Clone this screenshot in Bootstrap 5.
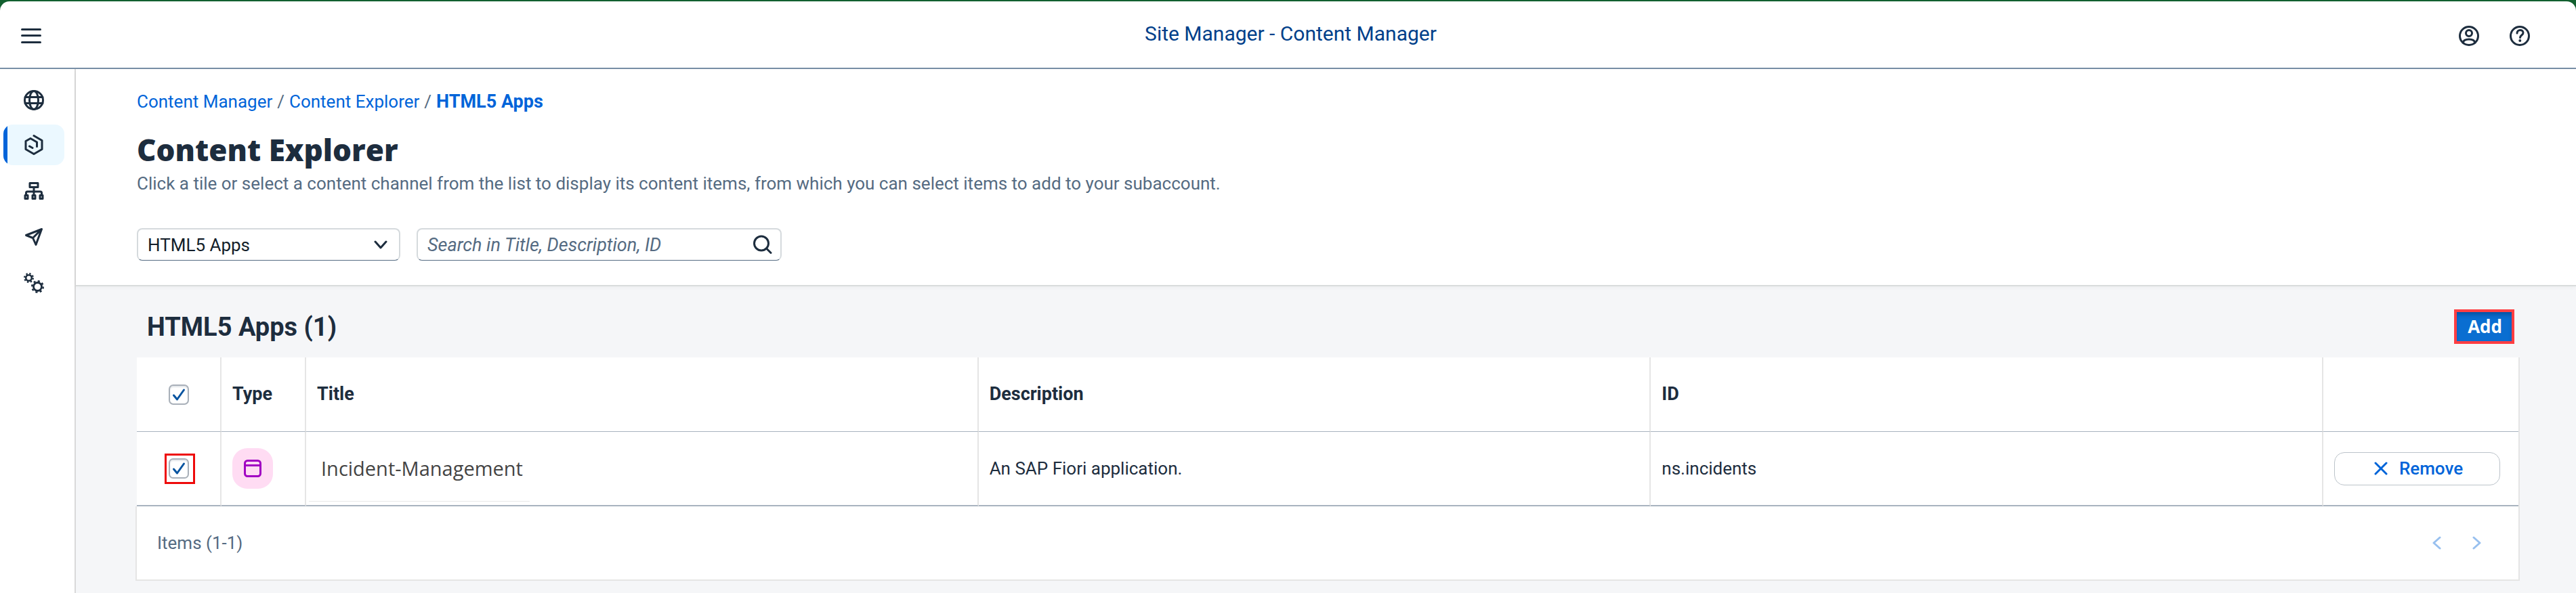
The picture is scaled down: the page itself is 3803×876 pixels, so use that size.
<!DOCTYPE html>
<html lang="en">
<head>
<meta charset="utf-8">
<meta name="viewport" content="width=device-width, initial-scale=1">
<title>Site Manager - Content Manager</title>
<link href="https://cdn.jsdelivr.net/npm/bootstrap@5.3.0/dist/css/bootstrap.min.css" rel="stylesheet">
<style>
  :root { --ink: #1d2d3e; --muted: #556b82; --link: #0064d9; --line: #e5e5e5; --rule: #a8b3bf; }
  body { font-family: Roboto, "Liberation Sans", sans-serif; font-size: 26px; line-height: 36px; color: var(--ink); background: #f5f6f8; min-height: 100vh; }
  svg { display: block; fill: none; stroke: currentColor; stroke-width: 3; stroke-linecap: round; stroke-linejoin: round; }
  a { color: var(--link); text-decoration: none; }
  .shell-frame { background: #12602f; padding-top: 2px; }
  .shell-bar { display: grid; grid-template-columns: 1fr auto 1fr; background: #fff; height: 100px; border-bottom: 2px solid #788fa6; border-radius: 14px 14px 0 0; padding: 4px 31px 0; }
  .shell-title { font-size: 30px; color: #00408a; padding: 0 0 6px 8px; margin: 0; font-weight: 400; }
  .shell-tools { gap: 45px; padding-right: 37px; }
  .icon-btn { color: var(--ink); border: 0; padding: 0; border-radius: 0; line-height: 1; }
  .side-nav { width: 112px; border-right: 2px solid #d9d9d9; padding: 14px 15px 0 5px; gap: 8px; background: #fff; }
  .side-nav a { height: 60px; color: var(--ink); border-radius: 14px; overflow: hidden; }
  .side-nav a.active { background: linear-gradient(to right, var(--link) 6px, #ebf8ff 6px); }
  .page-head { background: #fff; border-bottom: 2px solid #d9dcdc; padding: 30px 90px 36px; box-shadow: 0 2px 6px rgba(0,0,0,.04); }
  .crumbs { height: 36px; color: var(--muted); --bs-breadcrumb-divider: "/"; --bs-breadcrumb-item-padding-x: 7px; --bs-breadcrumb-divider-color: #556b82; --bs-breadcrumb-font-size: 26px; }
  .crumbs .current { font-size: 27px; font-weight: 700; }
  .page-title { font-family: "Open Sans", sans-serif; font-weight: 800; font-size: 44px; line-height: 56px; margin: 25px 0 0; }
  .intro { color: var(--muted); margin: 4px 0 0; }
  .filters { gap: 24px; }
  .field { height: 48px; font-size: 26px; line-height: 36px; color: #131e29; border: 2px solid #d5dadd; border-bottom: 1px solid var(--muted); border-radius: 8px; padding: 5px 14px; background-color: #fff; }
  .channel { width: 389px; --bs-form-select-bg-img: url("data:image/svg+xml,%3csvg xmlns='http://www.w3.org/2000/svg' viewBox='0 0 20 20'%3e%3cpath fill='none' stroke='%231d2d3e' stroke-width='3' stroke-linecap='round' stroke-linejoin='round' d='M2 5l8 9 8-9'/%3e%3c/svg%3e"); background-image: var(--bs-form-select-bg-img); background-size: 20px 20px; background-position: right 17px center; }
  .finder { width: 539px; }
  .finder .field::placeholder { color: var(--muted); font-style: italic; font-size: 27px; opacity: 1; }
  .finder button { position: absolute; right: 14px; top: 10px; }
  .content-area { padding: 34px 83px 14px 88px; }
  .list-head { padding: 0 8px 20px 17px; }
  .list-title { font-size: 38px; line-height: 44px; font-weight: 700; margin: 0; }
  .btn-add { font-family: "Open Sans", sans-serif; font-weight: 700; font-size: 26px; line-height: 36px; color: #fff; background: #0a6ed1; border: 4px solid #ff3e42; border-radius: 0; padding: 3px 14px 4px 16px; box-shadow: inset 0 6px 6px -2px rgba(0,40,90,.4); }
  .btn-add:hover { color: #fff; background: #0a6ed1; }
  .panel { padding-left: 2px; }
  .items { table-layout: fixed; margin: 0; border-right: 2px solid var(--line); border-collapse: separate; border-spacing: 0; --bs-table-color: #1d2d3e; --bs-table-bg: #fff; }
  .items th, .items td { height: 110px; padding: 0 14px 0 16px; vertical-align: middle; border: 0 solid var(--line); border-right-width: 2px; }
  .items th { border-bottom: 1px solid var(--rule); font-size: 27px; padding-bottom: 2px; }
  .items td { border-bottom: 2px solid var(--rule); }
  .items th:last-child, .items td:last-child { border-right: 0; }
  .items th:first-child, .items td:first-child { padding: 0; }
  .col-tick, .col-kind { width: 125px; }
  .col-act { width: 288px; }
  .tick { width: 30px; height: 30px; margin: 0; border: 2px solid #a9b0b9; border-radius: 4px; background-color: #fff; display: block; float: none; box-shadow: inset 0 2px 2px #e3e6ea; }
  .tick:checked { background-color: #fff; border-color: #a9b0b9; background-size: 20px 20px; background-image: url("data:image/svg+xml,%3csvg xmlns='http://www.w3.org/2000/svg' viewBox='0 0 20 20'%3e%3cpath fill='none' stroke='%230854a0' stroke-width='3' stroke-linecap='round' stroke-linejoin='round' d='M2.500 11l5 6L17.500 3'/%3e%3c/svg%3e"); }
  .tick-mark { border: 3px solid #ee0a0a; padding: 4px 6px 5px 3px; }
  .kind { width: 60px; height: 60px; border-radius: 22px; background: #ffdcf3; color: #a100c2; }
  .item-name { font-family: "Open Sans", sans-serif; font-size: 29px; color: #444; width: 326px; height: 98px; margin: 0 0 0 -12px; padding-left: 18px; border-bottom: 1px solid #e8e8e8; }
  .btn-remove { width: 245px; height: 49px; font-size: 26px; line-height: 36px; font-weight: 500; color: var(--link); background: #fff; border: 1px solid #bcc3ca; border-radius: 15px; padding: 0 0 0 4px; gap: 17px; }
  .pager { background: #fff; border: solid var(--line); border-width: 0 2px 2px; margin-left: -2px; height: 110px; padding: 0 54px 0 30px; color: var(--muted); }
  .pager-steps { gap: 46px; }
  .pager button:disabled { color: var(--link); opacity: .4; border: 0; }
</style>
</head>
<body class="d-flex flex-column">
<div class="shell-frame">
  <header class="shell-bar align-items-center">
    <button type="button" class="btn icon-btn text-start" aria-label="Menu"><svg width="30" height="24" viewBox="0 0 30 24"><path d="M1.500 2.500h27M1.500 11.500h27M1.500 21.500h27"/></svg></button>
    <h1 class="shell-title">Site Manager - Content Manager</h1>
    <div class="d-flex justify-content-end shell-tools">
      <button type="button" class="btn icon-btn" aria-label="Profile"><svg width="30" height="30" viewBox="0 0 30 30"><circle cx="15" cy="15" r="13.500"/><circle cx="15" cy="11" r="4.500"/><path d="M6 25c1-4 4-5 9-5s8 1 9 5"/></svg></button>
      <button type="button" class="btn icon-btn" aria-label="Help"><svg width="30" height="30" viewBox="0 0 30 30"><circle cx="15" cy="15" r="13.500"/><path d="M11 11c0-6 9-6 9-.5 0 3.500-4.500 3.500-4.500 7"/><circle cx="15.300" cy="22" r="1" fill="currentColor" stroke-width="2"/></svg></button>
    </div>
  </header>
</div>
<div class="d-flex align-items-stretch flex-grow-1">
  <nav class="side-nav d-flex flex-column flex-shrink-0" aria-label="Main">
    <a href="#" class="d-flex align-items-center justify-content-center" aria-label="Sites"><svg width="30" height="34" viewBox="0 -4 30 34"><circle cx="15" cy="15" r="13.500"/><ellipse cx="15" cy="15" rx="6.500" ry="13.500"/><path d="M2 10.500h26M2 19.500h26"/></svg></a>
    <a href="#" class="active d-flex align-items-center justify-content-center" aria-label="Content Manager"><svg width="30" height="30" viewBox="0 0 30 30"><path d="M15 1.500l12 7v13l-12 7-12-7V9.500L10 5.500l9.500 5.500v6.500M8.500 17l4.500 2.500"/></svg></a>
    <a href="#" class="d-flex align-items-center justify-content-center" aria-label="Structure"><svg width="30" height="30" viewBox="0 0 30 30"><rect x="9" y="3.500" width="12" height="6"/><path d="M15 10v9M3.500 20v-2q0-2 2-2h19q2 0 2 2v2"/><rect x="2" y="21.500" width="4" height="5"/><rect x="13" y="21.500" width="4" height="5"/><rect x="24" y="21.500" width="4" height="5"/></svg></a>
    <a href="#" class="d-flex align-items-center justify-content-center" aria-label="Transport"><svg width="30" height="30" viewBox="0 0 30 30"><path d="M26.500 3.500L3.500 12.500l10 4 4.500 10zM26.500 3.500l-13 13"/></svg></a>
    <a href="#" class="d-flex align-items-center justify-content-center" aria-label="Settings"><svg width="30" height="30" viewBox="0 0 30 30" style="stroke-linecap:butt"><circle cx="7.500" cy="7.500" r="4.300" stroke-width="2.600"/><circle cx="7.500" cy="7.500" r="6.400" stroke-width="2.200" stroke-dasharray="2.400 2.630"/><circle cx="20.500" cy="20.500" r="6" stroke-width="2.800"/><circle cx="20.500" cy="20.500" r="8.300" stroke-width="2.400" stroke-dasharray="3.100 3.420"/></svg></a>
  </nav>
  <main class="flex-grow-1">
    <section class="page-head">
      <nav aria-label="Breadcrumb">
        <ol class="breadcrumb crumbs mb-0">
          <li class="breadcrumb-item"><a href="#">Content Manager</a></li>
          <li class="breadcrumb-item"><a href="#">Content Explorer</a></li>
          <li class="breadcrumb-item"><a href="#" class="current" aria-current="page">HTML5 Apps</a></li>
        </ol>
      </nav>
      <h2 class="page-title">Content Explorer</h2>
      <p class="intro">Click a tile or select a content channel from the list to display its content items, from which you can select items to add to your subaccount.</p>
      <form class="d-flex mt-5 filters">
        <select id="channel" class="form-select field channel" aria-label="Content channel"><option>HTML5 Apps</option></select>
        <div class="finder position-relative">
          <input id="find" type="text" class="form-control field" placeholder="Search in Title, Description, ID" aria-label="Search">
          <button type="button" class="btn icon-btn" aria-label="Start search"><svg width="28" height="28" viewBox="0 0 28 28"><circle cx="12" cy="12.500" r="10.500"/><path d="M19.500 20l6.500 6.500"/></svg></button>
        </div>
      </form>
    </section>
    <section class="content-area">
      <div class="d-flex align-items-center justify-content-between list-head">
        <h3 class="list-title">HTML5 Apps (1)</h3>
        <button type="button" class="btn btn-add">Add</button>
      </div>
      <div class="panel">
        <table class="table items">
          <colgroup><col class="col-tick"><col class="col-kind"><col><col><col><col class="col-act"></colgroup>
          <thead>
            <tr>
              <th scope="col"><input class="form-check-input tick mx-auto" type="checkbox" checked aria-label="Select all"></th>
              <th scope="col">Type</th><th scope="col">Title</th><th scope="col">Description</th><th scope="col">ID</th><th scope="col" aria-label="Actions"></th>
            </tr>
          </thead>
          <tbody>
            <tr>
              <td><div class="d-flex justify-content-center ps-1"><span class="tick-mark"><input class="form-check-input tick" type="checkbox" checked aria-label="Select Incident-Management"></span></div></td>
              <td><span class="kind d-flex align-items-center justify-content-center"><svg width="28" height="28" viewBox="0 0 28 28"><rect x="2.500" y="2.500" width="23" height="23" rx="4"/><path d="M2.500 9.500h23"/></svg></span></td>
              <td><div class="item-name d-flex align-items-center">Incident-Management</div></td>
              <td>An SAP Fiori application.</td>
              <td>ns.incidents</td>
              <td><button type="button" class="btn btn-remove d-flex align-items-center justify-content-center"><svg width="20" height="20" viewBox="0 0 20 20"><path d="M2 2l16 16M18 2L2 18"/></svg>Remove</button></td>
            </tr>
          </tbody>
        </table>
        <div class="pager d-flex align-items-center justify-content-between">
          <span>Items (1-1)</span>
          <div class="d-flex pager-steps">
            <button type="button" class="btn icon-btn" disabled aria-label="Previous page"><svg width="14" height="20" viewBox="0 0 14 20"><path d="M12 2L3 10l9 8"/></svg></button>
            <button type="button" class="btn icon-btn" disabled aria-label="Next page"><svg width="14" height="20" viewBox="0 0 14 20"><path d="M2 2l9 8-9 8"/></svg></button>
          </div>
        </div>
      </div>
    </section>
  </main>
</div>
<script src="https://cdn.jsdelivr.net/npm/bootstrap@5.3.0/dist/js/bootstrap.bundle.min.js"></script>
</body>
</html>
